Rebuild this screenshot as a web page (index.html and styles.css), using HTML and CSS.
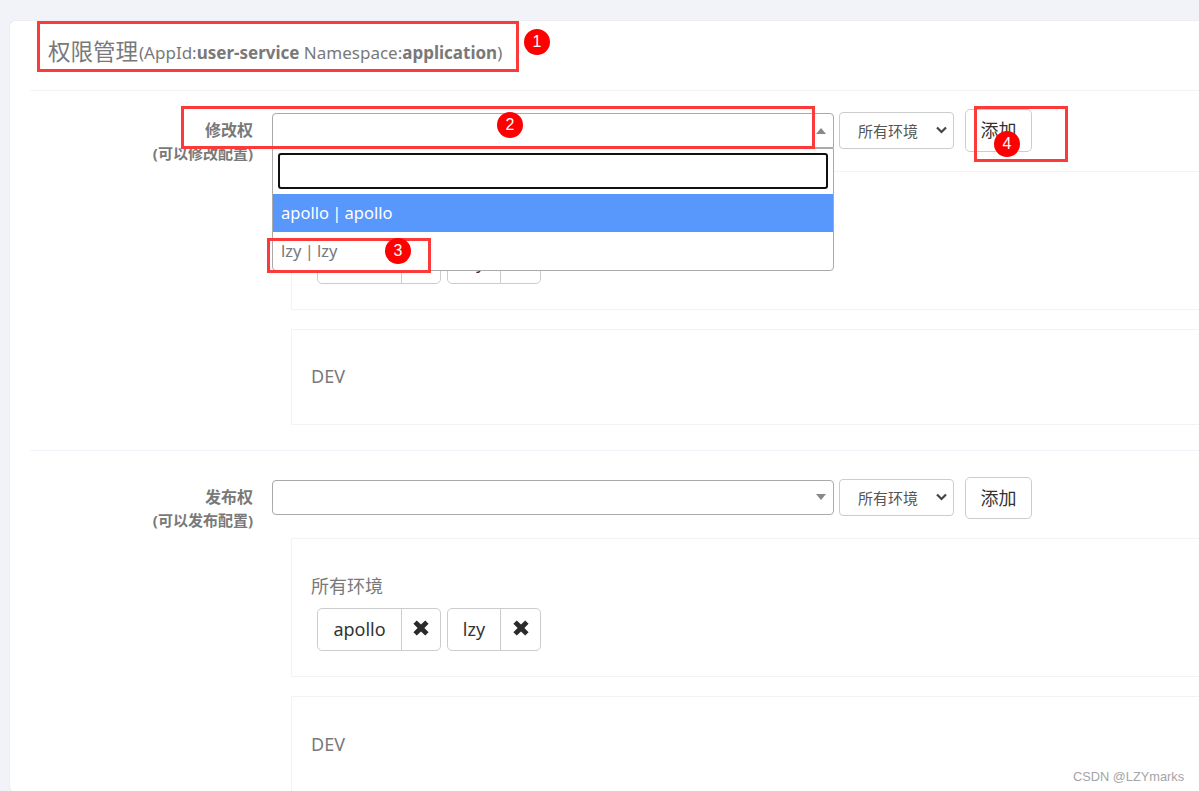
FILE: index.html
```html
<!DOCTYPE html>
<html lang="en">
<head>
  <meta charset="UTF-8">
  <meta name="viewport" content="width=device-width, initial-scale=1.0">
  <title>权限管理</title>
  <link rel="stylesheet" href="styles.css">
</head>
<body>
  <div class="page">
    <div class="card">
      <div class="card-head">
        <span class="title">权限管理</span><span class="subtitle">(AppId:<b>user-service</b> Namespace:<b>application</b>)</span>
      </div>

      <div class="section section-first">
        <div class="label-col">
          <div class="label-main">修改权</div>
          <div class="label-sub">(可以修改配置)</div>
        </div>
        <div class="body-col">
          <div class="controls">
            <div class="combo combo-open">
              <span class="arrow arrow-up"></span>
              <div class="dropdown">
                <div class="dropdown-search"><input class="search-input" type="text"></div>
                <div class="option option-active">apollo | apollo</div>
                <div class="option">lzy | lzy</div>
              </div>
            </div>
            <div class="env-select"><span class="env-text">所有环境</span>
              <svg class="chevron" width="11" height="8" viewBox="0 0 11 8"><path d="M1 1.5 5.500 6 10 1.500" fill="none" stroke="#444" stroke-width="2.200"/></svg>
            </div>
            <button class="add-btn">添加</button>
          </div>
          <div class="panel panel-users">
            <div class="env-name">所有环境</div>
            <div class="chips">
              <div class="chip"><span class="chip-name chip-apollo">apollo</span><span class="chip-del"><svg width="16" height="16" viewBox="0 0 16 16"><path d="M3.800 .4 8 4.600 12.200 .4 15.600 3.800 11.400 8 15.600 12.200 12.200 15.600 8 11.400 3.800 15.600 .4 12.200 4.600 8 .4 3.800Z" fill="#2b2b2b"/></svg></span></div>
              <div class="chip"><span class="chip-name chip-lzy">lzy</span><span class="chip-del chip-del-wide"><svg width="16" height="16" viewBox="0 0 16 16"><path d="M3.800 .4 8 4.600 12.200 .4 15.600 3.800 11.400 8 15.600 12.200 12.200 15.600 8 11.400 3.800 15.600 .4 12.200 4.600 8 .4 3.800Z" fill="#2b2b2b"/></svg></span></div>
            </div>
          </div>
          <div class="panel panel-env">
            <div class="env-name">DEV</div>
          </div>
        </div>
      </div>

      <div class="section section-second">
        <div class="label-col">
          <div class="label-main">发布权</div>
          <div class="label-sub">(可以发布配置)</div>
        </div>
        <div class="body-col">
          <div class="controls">
            <div class="combo">
              <span class="arrow"></span>
            </div>
            <div class="env-select"><span class="env-text">所有环境</span>
              <svg class="chevron" width="11" height="8" viewBox="0 0 11 8"><path d="M1 1.5 5.500 6 10 1.500" fill="none" stroke="#444" stroke-width="2.200"/></svg>
            </div>
            <button class="add-btn">添加</button>
          </div>
          <div class="panel panel-users">
            <div class="env-name">所有环境</div>
            <div class="chips">
              <div class="chip"><span class="chip-name chip-apollo">apollo</span><span class="chip-del"><svg width="16" height="16" viewBox="0 0 16 16"><path d="M3.800 .4 8 4.600 12.200 .4 15.600 3.800 11.400 8 15.600 12.200 12.200 15.600 8 11.400 3.800 15.600 .4 12.200 4.600 8 .4 3.800Z" fill="#2b2b2b"/></svg></span></div>
              <div class="chip"><span class="chip-name chip-lzy">lzy</span><span class="chip-del chip-del-wide"><svg width="16" height="16" viewBox="0 0 16 16"><path d="M3.800 .4 8 4.600 12.200 .4 15.600 3.800 11.400 8 15.600 12.200 12.200 15.600 8 11.400 3.800 15.600 .4 12.200 4.600 8 .4 3.800Z" fill="#2b2b2b"/></svg></span></div>
            </div>
          </div>
          <div class="panel panel-env">
            <div class="env-name">DEV</div>
          </div>
        </div>
      </div>
    </div>

    <!-- red notes drawn over the screenshot -->
    <div class="mark mark-1"></div>
    <div class="mark mark-2"></div>
    <div class="mark mark-3"></div>
    <div class="mark mark-4"></div>
    <div class="dot dot-1">1</div>
    <div class="dot dot-2">2</div>
    <div class="dot dot-3">3</div>
    <div class="dot dot-4">4</div>

    <div class="watermark">CSDN @LZYmarks</div>
  </div>
</body>
</html>
```

FILE: styles.css
```css
body {
  margin: 0;
  font-family: "Noto Sans", "Noto Sans CJK SC", sans-serif;
  background-color: #f1f3f8;
  color: #797979;
}

.page {
  position: relative;
  height: 791px;
  padding: 21px 0 0 10px;
  box-sizing: border-box;
  overflow: hidden;
}

.card {
  width: 1260px;
  padding: 0 20px;
  box-sizing: border-box;
  background-color: #fff;
  border-radius: 5px;
  box-shadow: 0 0 1px rgba(0, 0, 0, 0.2);
}

.card-head {
  height: 70px;
  padding: 0 0 10px 18px;
  border-bottom: 1px solid #f1f3f8;
  display: flex;
  align-items: center;
  box-sizing: border-box;
}

.title {
  font-size: 22.500px;
}

.subtitle {
  font-size: 17px;
  position: relative;
  top: 2px;
  left: 1px;
}

.section {
  display: flex;
  padding-top: 26px;
  border-top: 1px solid #f1f3f8;
}

.section-first {
  padding-top: 18px;
  padding-bottom: 25px;
  border-top: 0;
}

.label-col {
  width: 223px;
  flex: none;
  padding-top: 9px;
  text-align: right;
  font-weight: bold;
  line-height: 24px;
}

.section-second .label-col {
  padding-top: 8px;
}

.label-main {
  font-size: 16px;
}

.label-sub {
  font-size: 15px;
  line-height: 23px;
  white-space: nowrap;
}

.body-col {
  margin-left: 19px;
  flex: 1;
}

.controls {
  display: flex;
  align-items: center;
  height: 43px;
}

.section-second .controls {
  height: 41px;
  padding-bottom: 1px;
}

.combo {
  position: relative;
  width: 562px;
  height: 35px;
  box-sizing: border-box;
  border: 1px solid #aaa;
  border-radius: 4px;
  background-color: #fff;
}

.combo-open {
  border-radius: 4px 4px 0 0;
}

.arrow {
  position: absolute;
  right: 7px;
  top: 13px;
  border-left: 5px solid transparent;
  border-right: 5px solid transparent;
  border-top: 6px solid #888;
}

.arrow-up {
  top: 14px;
  border-top: 0;
  border-bottom: 6px solid #888;
}

.dropdown {
  position: absolute;
  left: -1px;
  right: -1px;
  top: 34px;
  height: 123px;
  box-sizing: border-box;
  background-color: #fff;
  border: 1px solid #aaa;
  border-radius: 0 0 4px 4px;
  z-index: 5;
}

.dropdown-search {
  padding: 4px 5px 5px;
}

.search-input {
  display: block;
  width: 100%;
  height: 36px;
  box-sizing: border-box;
  border: 2px solid #101010;
  border-radius: 3px;
  outline: none;
}

.option {
  height: 38px;
  line-height: 38px;
  padding-left: 8px;
  font-size: 16.500px;
  word-spacing: -1px;
}

.option-active {
  background-color: #5897fb;
  color: #fff;
}

.env-select {
  width: 115px;
  height: 37px;
  margin-left: 5px;
  padding: 0 6px 1px 18px;
  box-sizing: border-box;
  display: flex;
  align-items: center;
  justify-content: space-between;
  border: 1px solid #ccc;
  border-radius: 4px;
  font-size: 15px;
  color: #555;
}

.add-btn {
  width: 67px;
  height: 43px;
  margin-left: 11px;
  padding: 0 0 3px;
  font-family: inherit;
  font-size: 18px;
  color: #333;
  background-color: #fff;
  border: 1px solid #ccc;
  border-radius: 5px;
}

.section-second .add-btn {
  height: 42px;
  align-self: flex-start;
}

.panel {
  margin-left: 19px;
  padding-left: 19px;
  border: 1px solid #f1f3f8;
}

.panel-users {
  height: 139px;
  margin-top: 19px;
  padding-top: 35px;
  box-sizing: border-box;
}

.panel-env {
  height: 96px;
  margin-top: 19px;
  padding-top: 34px;
  box-sizing: border-box;
}

.section-second .panel-env {
  padding-top: 35px;
}

.env-name {
  font-size: 18px;
  line-height: 24px;
}

.chips {
  display: flex;
  gap: 6px;
  margin: 10px 0 0 6px;
}

.chip {
  display: flex;
  height: 43px;
  box-sizing: border-box;
  border: 1px solid #ccc;
  border-radius: 5px;
  font-size: 18px;
  color: #333;
}

.chip-name {
  display: flex;
  align-items: center;
  justify-content: center;
  padding-bottom: 1px;
  box-sizing: content-box;
  border-right: 1px solid #ccc;
}

.chip-apollo {
  width: 83px;
}

.chip-lzy {
  width: 52px;
}

.chip-del {
  width: 38px;
  display: flex;
  align-items: center;
  justify-content: center;
  padding-bottom: 3px;
  box-sizing: border-box;
}

.chip-del-wide {
  width: 39px;
}

.mark {
  position: absolute;
  box-sizing: border-box;
  border: 3px solid #fc3a3a;
  z-index: 10;
}

.mark-1 {
  left: 37px;
  top: 21px;
  width: 482px;
  height: 51px;
}

.mark-2 {
  left: 181px;
  top: 106px;
  width: 634px;
  height: 43px;
}

.mark-3 {
  left: 267px;
  top: 238px;
  width: 164px;
  height: 35px;
}

.mark-4 {
  left: 974px;
  top: 106px;
  width: 94px;
  height: 56px;
}

.dot {
  position: absolute;
  width: 26px;
  height: 26px;
  line-height: 25px;
  margin: -13px 0 0 -13px;
  border-radius: 50%;
  background-color: #fe0000;
  color: #fff;
  font-family: "Liberation Sans", sans-serif;
  font-size: 16px;
  text-align: center;
  z-index: 11;
}

.dot-1 { left: 537px; top: 42px; }
.dot-2 { left: 510px; top: 125px; }
.dot-3 { left: 398px; top: 251px; }
.dot-4 { left: 1007px; top: 144px; }

.watermark {
  position: absolute;
  left: 1073px;
  top: 769px;
  font-family: "Liberation Sans", sans-serif;
  font-size: 12.800px;
  color: #a5a5a5;
}
```
